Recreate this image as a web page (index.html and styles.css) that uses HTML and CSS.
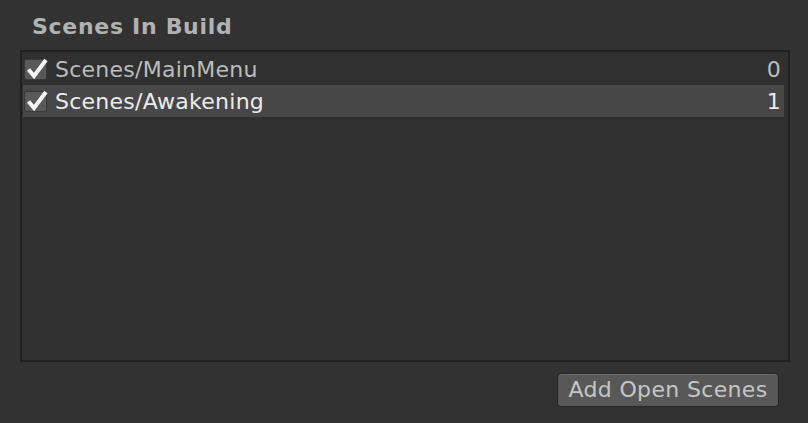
FILE: index.html
```html
<!DOCTYPE html>
<html>
<head>
<meta charset="utf-8">
<link rel="stylesheet" href="styles.css">
</head>
<body>
<div class="panel">
  <div class="title">Scenes In Build</div>
  <div class="list">
    <div class="row">
      <span class="check"><svg viewBox="0 0 26 24" width="26" height="24"><path d="M5.5 12.5 L11 19 L23 3" fill="none" stroke="#f4f4f4" stroke-width="4" stroke-linecap="butt" stroke-linejoin="miter"/></svg></span>
      <span class="name">Scenes/MainMenu</span>
      <span class="idx">0</span>
    </div>
    <div class="row selected">
      <span class="check"><svg viewBox="0 0 26 24" width="26" height="24"><path d="M5.5 12.5 L11 19 L23 3" fill="none" stroke="#f4f4f4" stroke-width="4" stroke-linecap="butt" stroke-linejoin="miter"/></svg></span>
      <span class="name">Scenes/Awakening</span>
      <span class="idx">1</span>
    </div>
  </div>
  <div class="actions">
    <button class="btn">Add Open Scenes</button>
  </div>
</div>
</body>
</html>
```
FILE: styles.css
```css
html, body {
  margin: 0;
  padding: 0;
  background: #323232;
  width: 808px;
  height: 423px;
  overflow: hidden;
  font-family: "DejaVu Sans", sans-serif;
}
.panel {
  padding: 14px 18px 0 20px;
}
.title {
  font-weight: bold;
  font-size: 22px;
  color: #b2b2b2;
  letter-spacing: 0.7px;
  padding-left: 12px;
  height: 36px;
  line-height: 26px;
}
.list {
  border: 2px solid #202020;
  background: #303030;
  height: 312px;
  padding: 1px 4px 0 1px;
  box-sizing: border-box;
}
.row {
  display: flex;
  align-items: center;
  height: 32px;
  padding-left: 1px;
  color: #bcbcbc;
  font-size: 22px;
  letter-spacing: 0.25px;
}
.row.selected {
  background: #474747;
  color: #ececec;
}
.check {
  position: relative;
  width: 23px;
  height: 21px;
  box-sizing: border-box;
  background: #595959;
  border: 1px solid #383838;
  border-radius: 2px;
  margin-right: 8px;
  margin-top: 1px;
}
.check svg {
  position: absolute;
  left: -2px;
  top: -3px;
  display: block;
}
.name { flex: 1; }
.idx { padding-right: 3px; }
.actions {
  display: flex;
  justify-content: flex-end;
  padding-top: 11px;
  padding-right: 11px;
}
.btn {
  font-family: "DejaVu Sans", sans-serif;
  font-size: 22px;
  letter-spacing: 0.35px;
  color: #c6c6c6;
  background: #585858;
  border: 1px solid #262626;
  border-radius: 4px;
  width: 222px;
  height: 34px;
  padding: 0;
  line-height: 30px;
  box-shadow: inset 0 1px 0 #6c6c6c;
}
```
